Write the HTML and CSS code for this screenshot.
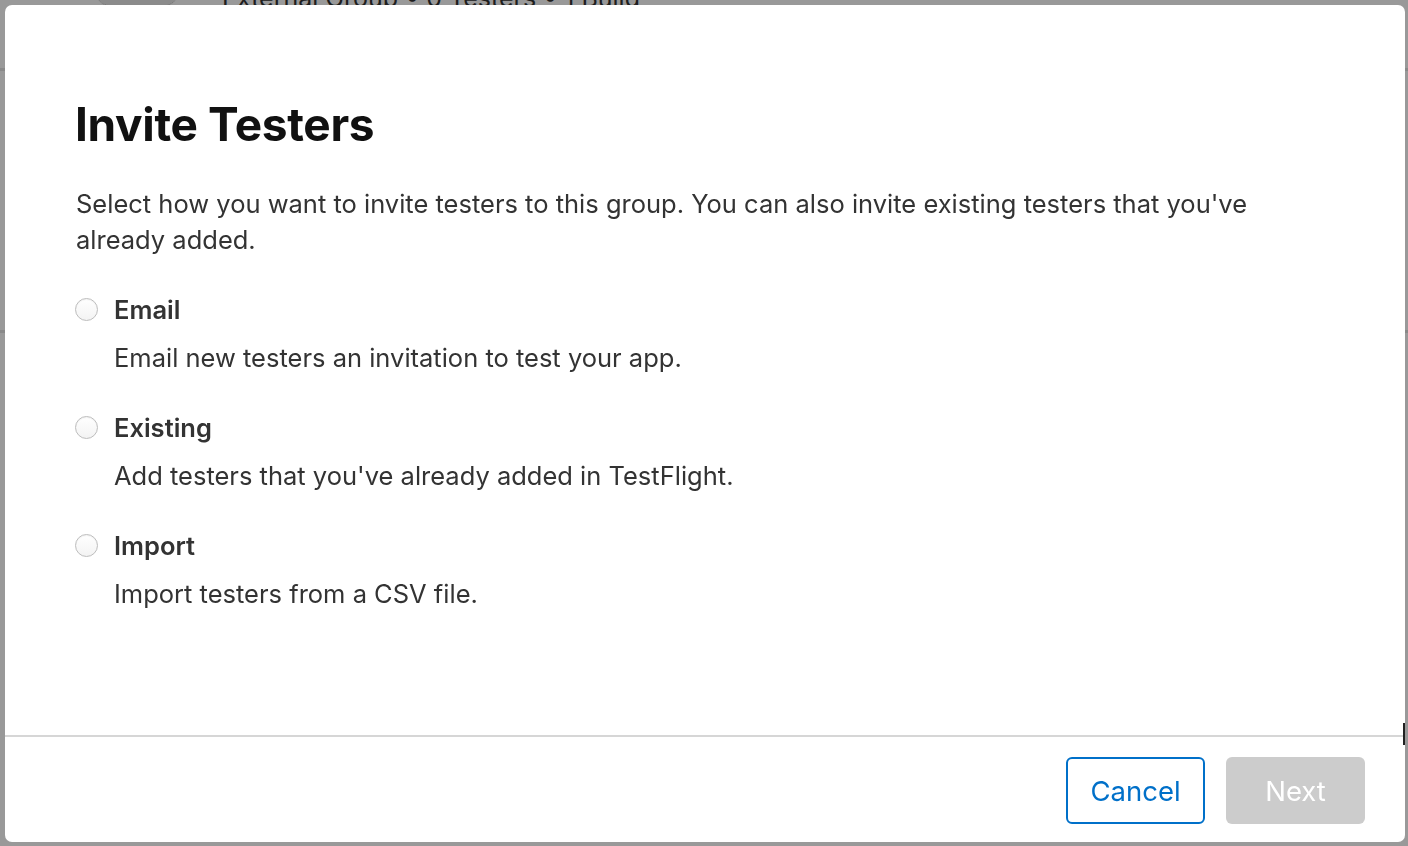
FILE: index.html
```html
<!DOCTYPE html>
<html lang="en">
<head>
<meta charset="utf-8">
<title>Invite Testers</title>
<link rel="stylesheet" href="styles.css">
</head>
<body>
<div class="backdrop">
  <div class="bg-header">
    <div class="bg-icon"></div>
    <div class="bg-meta">External Group • 0 Testers • 1 Build</div>
  </div>
  <div class="bg-rule bg-rule-a"></div>
  <div class="bg-rule bg-rule-b"></div>
</div>
<div class="overlay"></div>
<div class="modal" role="dialog" aria-labelledby="title">
  <div class="modal-body">
    <h1 id="title" class="title">Invite Testers</h1>
    <p class="intro">Select how you want to invite testers to this group. You can also invite existing testers that you've already added.</p>
    <ul class="options">
      <li class="option">
        <label class="option-head"><span class="radio"></span><span class="option-label">Email</span></label>
        <p class="option-desc">Email new testers an invitation to test your app.</p>
      </li>
      <li class="option">
        <label class="option-head"><span class="radio"></span><span class="option-label">Existing</span></label>
        <p class="option-desc">Add testers that you've already added in TestFlight.</p>
      </li>
      <li class="option">
        <label class="option-head"><span class="radio"></span><span class="option-label">Import</span></label>
        <p class="option-desc">Import testers from a CSV file.</p>
      </li>
    </ul>
  </div>
  <div class="modal-footer">
    <button class="btn btn-cancel">Cancel</button>
    <button class="btn btn-next" disabled>Next</button>
  </div>
  <div class="scroll-mark"></div>
</div>
</body>
</html>
```
FILE: styles.css
```css
* { box-sizing: border-box; }
html, body { margin: 0; height: 100%; }
body {
  background: #fff;
  font-family: Inter, "Noto Sans", "Liberation Sans", sans-serif;
  overflow: hidden;
  position: relative;
}
.backdrop { height: 100%; }
.bg-header {
  display: flex;
  align-items: flex-end;
  height: 8px;
  padding-left: 96px;
  gap: 44px;
}
.bg-icon {
  width: 82px;
  height: 40px;
  flex: none;
  margin-bottom: 2px;
  border-radius: 0 0 14px 14px;
  background: #e8e8e8;
  border-bottom: 1px dotted #bbb;
}
.bg-meta {
  font-size: 25px;
  color: #333;
  line-height: 1;
  white-space: nowrap;
  margin-bottom: -3px;
}
.bg-rule { height: 3px; background: #e4e4e4; }
.bg-rule-a { margin-top: 60px; }
.bg-rule-b { margin-top: 259px; }
.overlay {
  position: fixed;
  inset: 0;
  background: rgba(0, 0, 0, 0.4);
}
.modal {
  position: fixed;
  left: 5px;
  top: 5px;
  width: 1400px;
  height: 837px;
  background: #fff;
  border-radius: 7px;
  display: flex;
  flex-direction: column;
  overflow: hidden;
}
.modal-body {
  flex: 1;
  padding: 89px 71px 0;
  color: #333;
}
.title {
  margin: 0 0 0 -1px;
  font-size: 46px;
  font-weight: 700;
  line-height: 60px;
  color: #111;
  letter-spacing: -0.35px;
}
.intro {
  margin: 32px 0 0;
  font-size: 25.5px;
  line-height: 36px;
  color: #333;
  max-width: 1200px;
}
.options { list-style: none; margin: 33px 0 0 -1px; padding: 0; }
.option + .option { margin-top: 33px; }
.option-head {
  display: flex;
  align-items: center;
  height: 36px;
  gap: 15px;
}
.radio {
  width: 23px;
  height: 23px;
  flex: none;
  border-radius: 50%;
  border: 1px solid #bdbdbd;
  background: linear-gradient(#fff, #f3f3f3);
  box-shadow: inset 0 1px 1px rgba(0,0,0,0.05);
}
.option-label {
  font-size: 25.5px;
  font-weight: 600;
  color: #333;
  margin-left: 1px;
}
.option-desc {
  margin: 13px 0 0 39px;
  font-size: 25.5px;
  line-height: 36px;
  color: #333;
}
.modal-footer {
  height: 107px;
  border-top: 2px solid #d6d6d6;
  display: flex;
  align-items: center;
  justify-content: flex-end;
  gap: 21px;
  padding: 2px 40px 0 0;
}
.btn {
  width: 139px;
  height: 67px;
  border-radius: 6px;
  font-family: inherit;
  font-size: 27.5px;
  font-weight: 400;
}
.btn-cancel {
  background: #fff;
  border: 2px solid #0070c9;
  color: #0070c9;
}
.btn-next {
  background: #cccccc;
  border: none;
  color: #fff;
}
.scroll-mark {
  position: absolute;
  right: 0;
  top: 718px;
  width: 2px;
  height: 22px;
  background: #222;
}
```
